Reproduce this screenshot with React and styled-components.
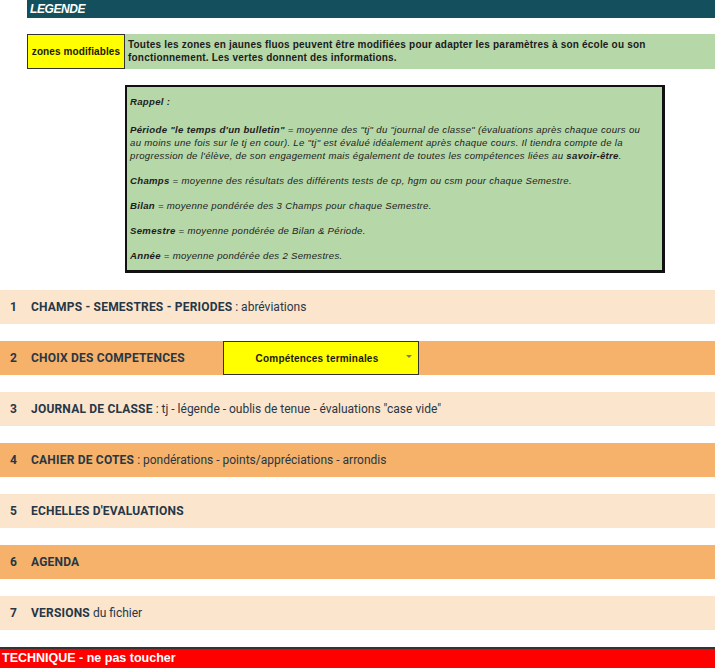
import styled, { createGlobalStyle } from "styled-components";

const GlobalStyle = createGlobalStyle`
  html, body {
    margin: 0;
    padding: 0;
    background: #ffffff;
  }
  body {
    font-family: "Liberation Sans", Arial, sans-serif;
  }
`;

const sections = [
  { num: 1, label: "CHAMPS - SEMESTRES - PERIODES", rest: " : abréviations", tone: "light" },
  { num: 2, label: "CHOIX DES COMPETENCES", tone: "dark", select: "Compétences terminales" },
  { num: 3, label: "JOURNAL DE CLASSE", rest: ' : tj - légende - oublis de tenue - évaluations "case vide"', tone: "light" },
  { num: 4, label: "CAHIER DE COTES", rest: " : pondérations - points/appréciations - arrondis", tone: "dark" },
  { num: 5, label: "ECHELLES D'EVALUATIONS", tone: "light" },
  { num: 6, label: "AGENDA", tone: "dark" },
  { num: 7, label: "VERSIONS", rest: " du fichier", tone: "light" },
];

export default function App() {
  return (
    <Page>
      <GlobalStyle />
      <TitleBar>LEGENDE</TitleBar>

      <LegendRow>
        <YellowCell>zones modifiables</YellowCell>
        <InfoCell>
          Toutes les zones en jaunes fluos peuvent être modifiées pour adapter
          les paramètres à son école ou son fonctionnement. Les vertes donnent
          des informations.
        </InfoCell>
      </LegendRow>

      <RappelBox>
        <p>
          <b>Rappel :</b>
        </p>
        <p>
          <b>Période "le temps d'un bulletin"</b> = moyenne des "tj" du
          "journal de classe" (évaluations après chaque cours ou au moins une
          fois sur le tj en cour). Le "tj" est évalué idéalement après chaque
          cours. Il tiendra compte de la progression de l'élève, de son
          engagement mais également de toutes les compétences liées au{" "}
          <b>savoir-être</b>.
        </p>
        <p>
          <b>Champs</b> = moyenne des résultats des différents tests de cp, hgm
          ou csm pour chaque Semestre.
        </p>
        <p>
          <b>Bilan</b> = moyenne pondérée des 3 Champs pour chaque Semestre.
        </p>
        <p>
          <b>Semestre</b> = moyenne pondérée de Bilan &amp; Période.
        </p>
        <p>
          <b>Année</b> = moyenne pondérée des 2 Semestres.
        </p>
      </RappelBox>

      <SectionList>
        {sections.map((s) => (
          <SectionRow key={s.num} $tone={s.tone}>
            <Num>{s.num}</Num>
            <Label $fixed={!!s.select}>
              <strong>{s.label}</strong>
              {s.rest}
            </Label>
            {s.select && (
              <SelectBox>
                <span>{s.select}</span>
                <Caret />
              </SelectBox>
            )}
          </SectionRow>
        ))}
      </SectionList>

      <FooterBar>TECHNIQUE - ne pas toucher</FooterBar>
    </Page>
  );
}

const Page = styled.div`
  width: 715px;
  height: 668px;
  display: flex;
  flex-direction: column;
  overflow: hidden;
`;

const TitleBar = styled.div`
  margin-left: 27px;
  height: 18px;
  flex: none;
  background: #134f5c;
  color: #ffffff;
  font-weight: bold;
  font-style: italic;
  font-size: 12px;
  line-height: 18px;
  padding-left: 3px;
  letter-spacing: -0.4px;
`;

const LegendRow = styled.div`
  display: flex;
  flex: none;
  margin: 16px 0 0 27px;
  height: 35px;
`;

const YellowCell = styled.div`
  width: 98px;
  flex: none;
  box-sizing: border-box;
  background: #ffff00;
  border: 1px solid #333;
  display: flex;
  align-items: center;
  justify-content: center;
  font-size: 10px;
  font-weight: bold;
  color: #1a1a00;
  letter-spacing: 0.1px;
`;

const InfoCell = styled.div`
  flex: 1;
  background: #b6d7a8;
  font-size: 10px;
  font-weight: bold;
  color: #1b1b1b;
  line-height: 13px;
  padding: 4px 20px 0 3px;
  letter-spacing: 0.2px;
`;

const RappelBox = styled.div`
  flex: none;
  box-sizing: border-box;
  margin: 16px 0 0 125px;
  width: 540px;
  height: 188px;
  background: #b6d7a8;
  border: 2px solid #111;
  border-right-width: 3px;
  border-bottom-width: 3px;
  padding: 8px 14px 0 3px;
  font-size: 9.6px;
  font-style: italic;
  color: #1d1d1d;
  line-height: 13px;
  letter-spacing: 0.3px;

  p {
    margin: 0 0 12px;
  }
  p:first-child {
    margin-bottom: 15px;
  }
  b {
    font-weight: bold;
  }
`;

const SectionList = styled.div`
  margin-top: 17px;
  display: flex;
  flex-direction: column;
  gap: 17px;
`;

const SectionRow = styled.div`
  height: 34px;
  display: flex;
  align-items: center;
  background: ${(p) => (p.$tone === "dark" ? "#f6b26b" : "#fce5cd")};
  font-family: Roboto, "Liberation Sans", sans-serif;
  font-size: 12px;
  color: #263746;
`;

const Num = styled.span`
  width: 31px;
  padding-left: 10px;
  box-sizing: border-box;
  font-weight: bold;
`;

const Label = styled.span`
  width: ${(p) => (p.$fixed ? "192px" : "auto")};

  strong {
    font-weight: bold;
    letter-spacing: 0.2px;
  }
`;

const SelectBox = styled.div`
  width: 196px;
  height: 34px;
  box-sizing: border-box;
  background: #ffff00;
  border: 1px solid #333;
  display: flex;
  align-items: center;
  position: relative;
  font-family: "Liberation Sans", Arial, sans-serif;
  font-size: 10px;
  font-weight: bold;
  color: #1a1a00;
  letter-spacing: 0.2px;

  span {
    flex: 1;
    text-align: center;
    padding-right: 8px;
  }
`;

const Caret = styled.i`
  position: absolute;
  right: 6px;
  top: 13px;
  width: 0;
  height: 0;
  border-left: 3px solid transparent;
  border-right: 3px solid transparent;
  border-top: 3px solid #777;
`;

const FooterBar = styled.div`
  margin-top: auto;
  height: 19px;
  border-top: 2px solid #333;
  background: #ff0000;
  color: #ffffff;
  font-weight: bold;
  font-size: 12.5px;
  line-height: 19px;
  padding-left: 2px;
`;
